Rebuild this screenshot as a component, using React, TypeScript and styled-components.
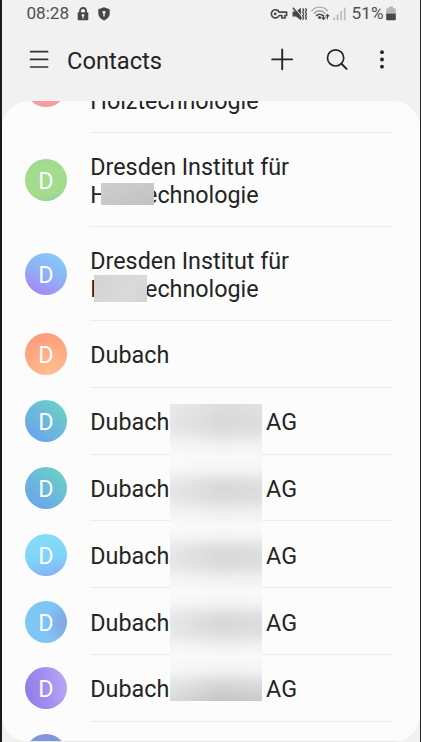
import React from 'react';
import styled, { createGlobalStyle } from 'styled-components';

const GlobalStyle = createGlobalStyle`
  * { box-sizing: border-box; }
  body { margin: 0; background: #f1f1f1; overflow: hidden; }
`;

const Screen = styled.main`
  width: 421px;
  height: 742px;
  display: flex;
  flex-direction: column;
  overflow: hidden;
  background: #f1f1f1;
  border-left: 2px solid #1a1a1c;
  border-right: 1px solid #29292b;
  font-family: Roboto, sans-serif;
  color: #242424;
`;

const StatusBar = styled.div`
  display: flex;
  flex: none;
  align-items: center;
  height: 27px;
  padding: 0 24px 0 24.4px;
  font-size: 17.2px;
  line-height: 27px;
  color: #505050;
  svg { display: block; flex: none; }
`;

const Clock = styled.span`
  width: 51px;
`;

const StatusLeft = styled.div`
  display: flex;
  align-items: center;
  flex: 1;
`;

const StatusRight = styled.div`
  display: flex;
  align-items: center;
`;

const Battery = styled.span`
  margin: 0 2.5px 0 6px;
`;

const Toolbar = styled.header`
  display: flex;
  flex: none;
  align-items: center;
  height: 74px;
  padding: 0 28px 8px 27px;
`;

const IconButton = styled.button<{ $size: number; $gap?: number }>`
  display: grid;
  place-items: center;
  flex: none;
  width: ${p => p.$size}px;
  height: ${p => p.$size}px;
  margin: 0 ${p => p.$gap ?? 0}px 0 0;
  padding: 0;
  border: 0;
  background: none;
  color: #242424;
  svg { display: block; }
`;

const Title = styled.h1`
  flex: 1;
  margin: 2px 0 0;
  font-size: 23.7px;
  font-weight: 400;
  line-height: 28px;
`;

const Panel = styled.section`
  position: relative;
  flex: 1;
  min-height: 0;
  overflow: hidden;
  display: flex;
  flex-direction: column;
  background: #fcfcfc;
  border-radius: 27px;
`;

const Row = styled.div<{ $height: number }>`
  display: flex;
  flex: none;
  align-items: center;
  height: ${p => p.$height}px;
  padding: 0 28px 0 23px;
`;

const FirstRow = styled(Row)`
  margin-top: -62px;
`;

const Avatar = styled.div<{ $fill: string }>`
  flex: none;
  width: 42px;
  height: 42px;
  margin-right: 23px;
  border-radius: 50%;
  background: ${p => p.$fill};
  color: #fbfbff;
  font-size: 23.4px;
  line-height: 45px;
  text-align: center;
`;

const Name = styled.div`
  position: relative;
  display: flex;
  flex: 1;
  align-items: center;
  height: 100%;
  padding: 4.4px 0 0 0.3px;
  border-bottom: 1px solid #ececec;
  font-size: 23.3px;
  line-height: 27.4px;
  white-space: pre-line;
`;

const LastLineName = styled(Name)`
  align-items: flex-end;
  padding-bottom: 17px;
`;

const Lead = styled.span`
  width: 175.8px;
`;

const Patch = styled.div<{ $x: number; $y: number; $h: number; $fill: string }>`
  position: absolute;
  left: ${p => p.$x}px;
  top: ${p => p.$y}px;
  width: 53px;
  height: ${p => p.$h}px;
  background: ${p => p.$fill};
`;

const BlurStrip = styled.div`
  position: absolute;
  left: 168px;
  top: 303px;
  width: 92px;
  height: 297px;
  background:
    linear-gradient(90deg, rgba(252,252,252,.4), rgba(252,252,252,0) 55%, rgba(252,252,252,.12)),
    linear-gradient(180deg,
      #dedede 0, #d8d8d8 18px, #dedede 28px, #f0f0f0 40px, #f9f9f9 54px, #f3f3f3 66px,
      #dcdcdc 79px, #d8d8d8 86px, #dcdcdc 95px, #eeeeee 108px, #f9f9f9 121px, #f3f3f3 132px,
      #dcdcdc 145px, #d8d8d8 153px, #dcdcdc 162px, #f0f0f0 175px, #f9f9f9 188px, #f3f3f3 199px,
      #dcdcdc 212px, #d8d8d8 220px, #dcdcdc 229px, #f0f0f0 242px, #f9f9f9 253px, #f1f1f1 267px,
      #d7d7d7 280px, #c4c4c4 297px);
`;

const BottomEdge = styled.div`
  position: absolute;
  left: 0;
  right: 0;
  bottom: 0;
  height: 1px;
  background: #e9e9e9;
`;

const Spacer = styled.span<{ $w: number }>`
  width: ${p => p.$w}px;
`;

const LockIcon = () => (
  <svg width="12" height="14" viewBox="0 0 12 14">
    <path d="M3 6V4a3 3 0 0 1 6 0v2" fill="none" stroke="#484848" strokeWidth="1.8" />
    <rect x=".7" y="5.3" width="10.6" height="8" rx="1" fill="#484848" />
    <circle cx="6" cy="8.3" r="1.2" fill="#f1f1f1" />
    <path d="M5.4 8.4h1.2v3H5.4z" fill="#f1f1f1" />
  </svg>
);

const ShieldIcon = () => (
  <svg width="12" height="14" viewBox="0 0 12 14">
    <path d="M6 .3 11.7 2.3v4.5c0 3-2.6 5.3-5.7 6.7C2.9 12.1.3 9.8.3 6.8V2.3z" fill="#484848" />
    <circle cx="6" cy="5.3" r="1.5" fill="#f1f1f1" />
    <path d="M5.3 5.5h1.4v4H5.3z" fill="#f1f1f1" />
  </svg>
);

const KeyIcon = () => (
  <svg width="18" height="12" viewBox="0 0 18 12">
    <path d="M9.2 4.2H16.6V7.5H15V10H11.9V7.5H9.2A4.1 4.1 0 1 1 9.2 4.2Z" fill="none" stroke="#484848" strokeWidth="1.7" strokeLinejoin="round" />
    <circle cx="5.2" cy="5.9" r="1.4" fill="#484848" />
  </svg>
);

const MuteVibrateIcon = () => (
  <svg width="15" height="14" viewBox="0 0 15 14">
    <path d="M.5 4.5H4L8.9.8V13.2L4 9.6H.5Z" fill="#484848" />
    <path d="M2.5.4 9.9 9.8" stroke="#f1f1f1" strokeWidth="1" />
    <path d="M1 .8 9.5 11.8" stroke="#484848" strokeWidth="1.6" />
    <path d="M10.7 1.3l1 1.7-1 2 1 2-1 2 1 2-1 1.7M13.5 1.3l1 1.7-1 2 1 2-1 2 1 2-1 1.7" fill="none" stroke="#484848" strokeWidth="1.3" />
  </svg>
);

const WifiIcon = () => (
  <svg width="19" height="15" viewBox="0 0 19 15">
    <g fill="none" strokeLinecap="round">
      <path d="M.9 4.7C5-.1 12.2-.1 16.3 4.7" stroke="#acacac" strokeWidth="1.4" />
      <path d="M3.3 7.2c2.9-3.2 7.7-3.2 10.6 0" stroke="#999" strokeWidth="1.4" />
      <path d="M5.6 9.5c1.7-1.7 4.3-1.7 6 0" stroke="#484848" strokeWidth="1.7" />
    </g>
    <circle cx="8.6" cy="11.5" r="1.5" fill="#484848" />
    <path d="M12.5 8.7v4.6m-1.9-1.9 1.9 1.9 1.9-1.9M16.4 13.2V8.5m-1.8 1.9 1.8-1.9 1.8 1.9" fill="none" stroke="#484848" strokeWidth="1.2" />
  </svg>
);

const SignalIcon = () => (
  <svg width="13" height="14" viewBox="0 0 13 14">
    <g fill="#bdbdbd">
      <rect x=".2" y="10.3" width="1.7" height="3" />
      <rect x="3.7" y="7.5" width="1.7" height="5.8" fill="#b4b4b4" />
      <rect x="7.3" y="4" width="1.7" height="9.3" />
      <rect x="10.9" y=".7" width="1.7" height="12.6" />
    </g>
  </svg>
);

const BatteryIcon = () => (
  <svg width="10" height="15" viewBox="0 0 10 15">
    <path d="M3 .5h4v1.7h2a.8.8 0 0 1 .8.8v4.5H.2V3a.8.8 0 0 1 .8-.8h2z" fill="#b7b7b7" />
    <path d="M.2 7.5h9.6v6a.8.8 0 0 1-.8.8H1a.8.8 0 0 1-.8-.8z" fill="#484848" />
  </svg>
);

const blueTeal = 'linear-gradient(40deg, #6aa5ee 12%, #6bb7dc 46%, #6bcfc7 88%)';

const companyFills = [
  blueTeal,
  blueTeal,
  'linear-gradient(170deg, #85daf7 20%, #7ed2f7 60%, #8aadf4 96%)',
  'radial-gradient(ellipse 22px 23px at 100% 52%, #84a5df 0, #82afe9 45%, #7fc5f5 100%)',
  'linear-gradient(80deg, #8f7bea 5%, #a28eee 48%, #b6a8f5 95%)',
];

const ORG = 'Dresden Institut für\nHolztechnologie';

export default function App() {
  return (
    <>
      <GlobalStyle />
      <Screen>
        <StatusBar>
          <StatusLeft>
            <Clock>08:28</Clock>
            <LockIcon />
            <Spacer $w={9} />
            <ShieldIcon />
          </StatusLeft>
          <StatusRight>
            <KeyIcon />
            <Spacer $w={4} />
            <MuteVibrateIcon />
            <Spacer $w={4} />
            <WifiIcon />
            <Spacer $w={3} />
            <SignalIcon />
            <Battery>51%</Battery>
            <BatteryIcon />
          </StatusRight>
        </StatusBar>
        <Toolbar>
          <IconButton $size={20} $gap={18} aria-label="Menu">
            <svg width="20" height="20" viewBox="0 0 20 20">
              <path d="M1.6 1.7h17M1.6 9.4h17M1.6 17h17" stroke="#303030" strokeWidth="1.7" strokeLinecap="round" />
            </svg>
          </IconButton>
          <Title>Contacts</Title>
          <IconButton $size={24} $gap={31.5} aria-label="Add contact">
            <svg width="24" height="24" viewBox="0 0 24 24">
              <path d="M2.2 11.4h19.9M12.2 1.4v19.9" stroke="#242424" strokeWidth="1.9" strokeLinecap="round" />
            </svg>
          </IconButton>
          <IconButton $size={24} $gap={23} aria-label="Search">
            <svg width="24" height="24" viewBox="0 0 24 24">
              <circle cx="10.6" cy="9.9" r="8.1" fill="none" stroke="#242424" strokeWidth="1.7" />
              <path d="m16.4 15.700 5.2 5.200" stroke="#242424" strokeWidth="2" strokeLinecap="round" />
            </svg>
          </IconButton>
          <IconButton $size={20} aria-label="More options">
            <svg width="20" height="20" viewBox="0 0 20 20" fill="#242424">
              <circle cx="10" cy="2.2" r="1.9" />
              <circle cx="10" cy="9.5" r="1.9" />
              <circle cx="10" cy="16.7" r="1.9" />
            </svg>
          </IconButton>
        </Toolbar>
        <Panel>
          <FirstRow $height={94}>
            <Avatar $fill="#f49da2" />
            <LastLineName>Holztechnologie</LastLineName>
          </FirstRow>
          <Row $height={94}>
            <Avatar $fill="linear-gradient(165deg, #8ad49a 0, #a4dc8d 18%, #a4dc8d 78%, #8ad49a 92%)">D</Avatar>
            <Name>
              {ORG}
              <Patch $x={11} $y={50} $h={22} $fill="linear-gradient(160deg, #cecece, #c2c2c2)" />
            </Name>
          </Row>
          <Row $height={94}>
            <Avatar $fill="linear-gradient(205deg, #87c6f8 18%, #8eaff6 52%, #a787f3 88%)">D</Avatar>
            <Name>
              {ORG}
              <Patch $x={4} $y={48} $h={27} $fill="linear-gradient(130deg, #d3d3d3, #dadada 65%, #d3d3d3)" />
            </Name>
          </Row>
          <Row $height={66.8}>
            <Avatar $fill="radial-gradient(circle at 62% 92%, #ffbd92 0, #ffb086 38%, #ff9e7c 75%)">D</Avatar>
            <Name>Dubach</Name>
          </Row>
          {companyFills.map((fill, index) => (
            <Row $height={66.8} key={index}>
              <Avatar $fill={fill}>D</Avatar>
              <Name>
                <Lead>Dubach</Lead>
                <span>AG</span>
              </Name>
            </Row>
          ))}
          <Row $height={66.8}>
            <Avatar $fill="#8096dc" />
          </Row>
          <BlurStrip />
          <BottomEdge />
        </Panel>
      </Screen>
    </>
  );
}
